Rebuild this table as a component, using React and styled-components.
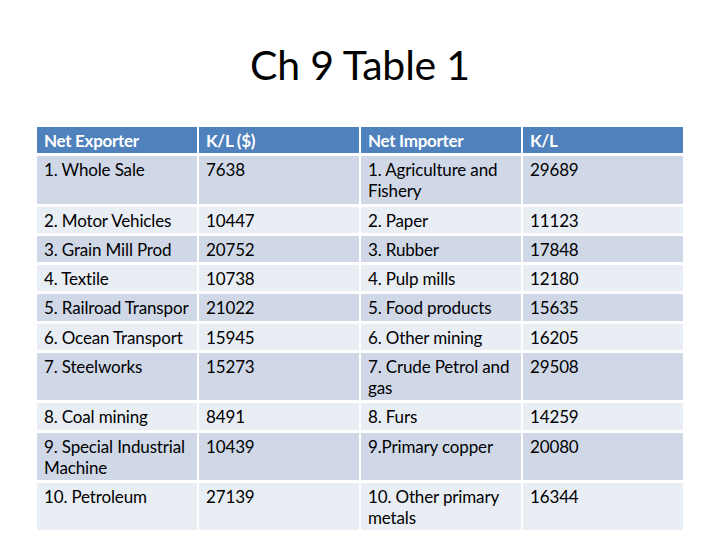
import React from "react";
import styled, { createGlobalStyle } from "styled-components";

const GlobalStyle = createGlobalStyle`
  html, body {
    margin: 0;
    padding: 0;
    background: #ffffff;
  }
  body {
    font-family: Lato, "Open Sans", "Liberation Sans", sans-serif;
  }
`;

const Slide = styled.div`
  width: 720px;
  height: 540px;
  box-sizing: border-box;
  padding-top: 43px;
  display: flex;
  flex-direction: column;
  align-items: center;
  background: #ffffff;
  overflow: hidden;
`;

const Title = styled.h1`
  margin: 0 0 40px;
  font-family: Lato, "Open Sans", sans-serif;
  font-weight: 400;
  font-size: 41px;
  line-height: 44px;
  color: #000000;
  letter-spacing: -0.2px;
`;

const Grid = styled.div`
  display: grid;
  grid-template-columns: repeat(4, 160px);
  column-gap: 2px;
  row-gap: 3px;
`;

const tones = {
  head: "#4f81bd",
  dark: "#d0d8e8",
  light: "#e9edf4",
};

const Cell = styled.div`
  box-sizing: border-box;
  padding: 3px 7px 2.3px;
  background: ${(p) => tones[p.$tone]};
  color: ${(p) => (p.$tone === "head" ? "#ffffff" : "#000000")};
  font-weight: ${(p) => (p.$tone === "head" ? 700 : 400)};
  font-size: 17px;
  line-height: 21px;
  white-space: nowrap;
  letter-spacing: ${(p) => (p.$tone === "head" ? "-0.3px" : "-0.15px")};
`;

const rows = [
  { cells: ["Net Exporter", "K/L ($)", "Net Importer", "K/L"], tone: "head" },
  { cells: ["1. Whole Sale", "7638", ["1. Agriculture and", "Fishery"], "29689"] },
  { cells: ["2. Motor Vehicles", "10447", "2. Paper", "11123"] },
  { cells: ["3. Grain Mill Prod", "20752", "3. Rubber", "17848"] },
  { cells: ["4. Textile", "10738", "4. Pulp mills", "12180"] },
  { cells: ["5. Railroad Transpor", "21022", "5. Food products", "15635"] },
  { cells: ["6. Ocean Transport", "15945", "6. Other mining", "16205"] },
  { cells: ["7. Steelworks", "15273", ["7. Crude Petrol and", "gas"], "29508"] },
  { cells: ["8. Coal mining", "8491", "8. Furs", "14259"] },
  { cells: [["9. Special Industrial", "Machine"], "10439", "9.Primary copper", "20080"] },
  { cells: ["10. Petroleum", "27139", ["10. Other primary", "metals"], "16344"] },
];

const CellText = ({ value }) =>
  Array.isArray(value)
    ? value.map((line, i) => (
        <React.Fragment key={i}>
          {i > 0 && <br />}
          {line}
        </React.Fragment>
      ))
    : value;

export default function App() {
  return (
    <>
      <GlobalStyle />
      <Slide>
        <Title>Ch 9 Table 1</Title>
        <Grid>
          {rows.map((row, r) =>
            row.cells.map((c, ci) => (
              <Cell
                key={`${r}-${ci}`}
                $tone={row.tone || (r % 2 === 1 ? "dark" : "light")}
              >
                <CellText value={c} />
              </Cell>
            ))
          )}
        </Grid>
      </Slide>
    </>
  );
}
